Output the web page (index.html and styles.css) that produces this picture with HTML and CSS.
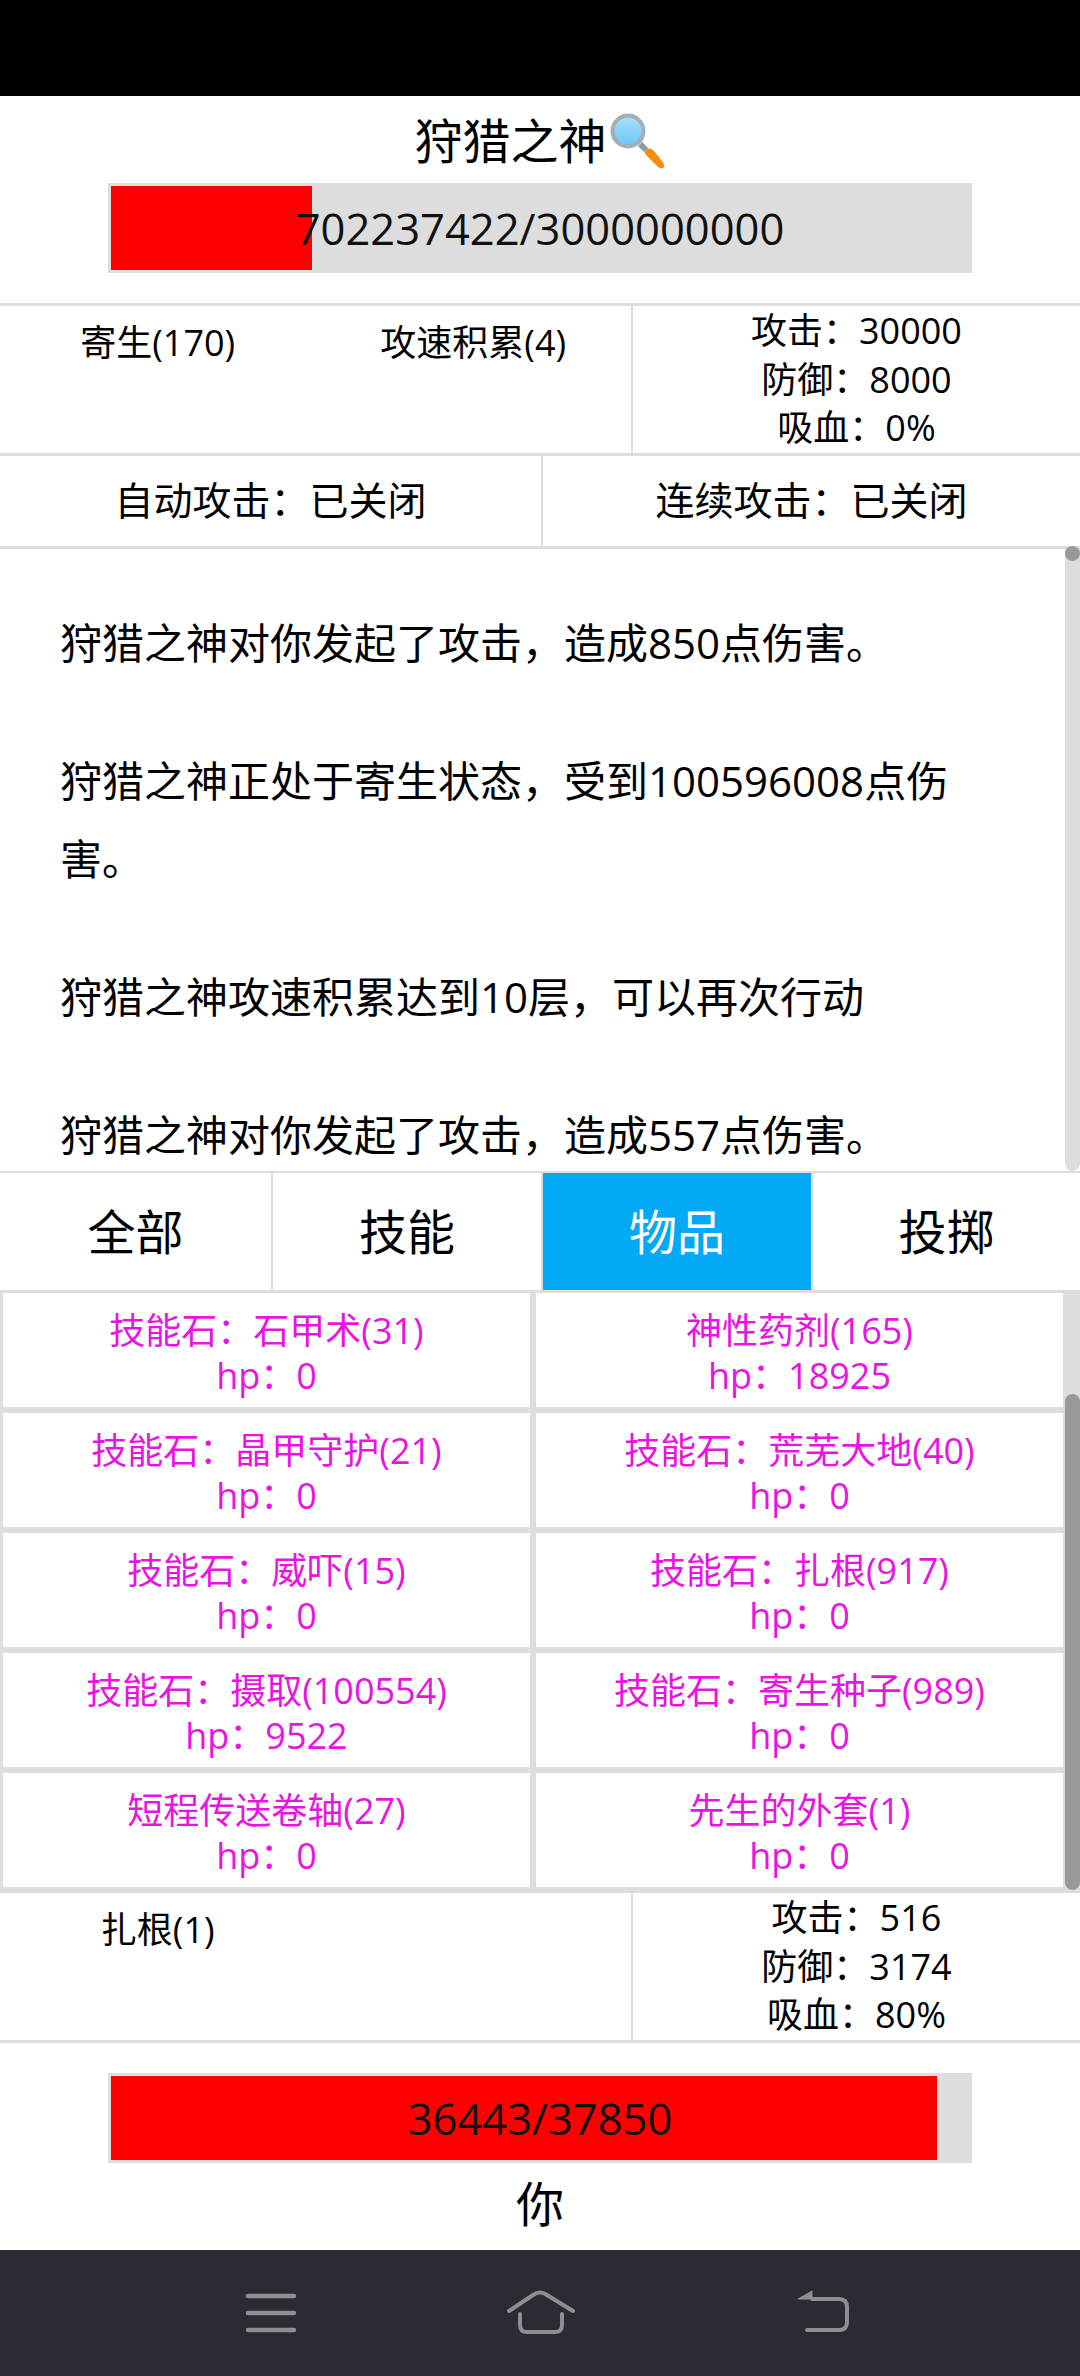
FILE: index.html
```html
<!DOCTYPE html>
<html lang="zh-CN">
<head>
    <meta charset="UTF-8">
    <meta name="viewport" content="width=device-width, initial-scale=1.0">
    <title>狩猎之神</title>
    <link rel="stylesheet" href="styles.css">
</head>
<body>
    <div class="status-bar"></div>

    <div class="unit-name boss-name">
        <span>狩猎之神</span>
        <svg class="emoji" width="56" height="56" viewBox="0 0 56 56">
            <defs>
                <linearGradient id="lens" x1="0" y1="0" x2="0" y2="1">
                    <stop offset="0" stop-color="#a6e0fb"/>
                    <stop offset="1" stop-color="#6cc6f5"/>
                </linearGradient>
            </defs>
            <path d="M30 31 L36 37" stroke="#8f9ba3" stroke-width="6" fill="none"/>
            <path d="M35.5 37 C38 34.5 41 35 44 38 L52 48 C55 52 54.5 54 53 55 C51 56 49 55 46 52 L37 43 C34.500 40.500 34 39 35.500 37 Z" fill="#f58c0f"/>
            <circle cx="18" cy="18" r="15.500" fill="url(#lens)" stroke="#a3aeb5" stroke-width="4"/>
        </svg>
    </div>
    <div class="hp-bar">
        <div class="hp-fill" style="width: 23.4%"></div>
        <div class="hp-text">702237422/3000000000</div>
    </div>

    <div class="info-row boss-info">
        <div class="buffs">
            <div class="buff">寄生(170)</div>
            <div class="buff">攻速积累(4)</div>
        </div>
        <div class="stats">
            <div>攻击：30000</div>
            <div>防御：8000</div>
            <div>吸血：0%</div>
        </div>
    </div>

    <div class="toggles">
        <div class="toggle">自动攻击：已关闭</div>
        <div class="toggle">连续攻击：已关闭</div>
    </div>

    <div class="log-wrap">
        <div class="log">
            <p>狩猎之神对你发起了攻击，造成850点伤害。</p>
            <p>狩猎之神正处于寄生状态，受到100596008点伤害。</p>
            <p>狩猎之神攻速积累达到10层，可以再次行动</p>
            <p>狩猎之神对你发起了攻击，造成557点伤害。</p>
        </div>
        <div class="log-track"><div class="log-thumb"></div></div>
    </div>

    <div class="tabs">
        <div class="tab">全部</div>
        <div class="tab">技能</div>
        <div class="tab active">物品</div>
        <div class="tab">投掷</div>
    </div>

    <div class="items-wrap">
        <div class="items">
            <div class="item">技能石：石甲术(31)<br>hp：0</div>
            <div class="item">神性药剂(165)<br>hp：18925</div>
            <div class="item">技能石：晶甲守护(21)<br>hp：0</div>
            <div class="item">技能石：荒芜大地(40)<br>hp：0</div>
            <div class="item">技能石：威吓(15)<br>hp：0</div>
            <div class="item">技能石：扎根(917)<br>hp：0</div>
            <div class="item">技能石：摄取(100554)<br>hp：9522</div>
            <div class="item">技能石：寄生种子(989)<br>hp：0</div>
            <div class="item">短程传送卷轴(27)<br>hp：0</div>
            <div class="item">先生的外套(1)<br>hp：0</div>
        </div>
        <div class="items-track"><div class="items-thumb"></div></div>
    </div>

    <div class="info-row player-info">
        <div class="buffs">
            <div class="buff">扎根(1)</div>
            <div class="buff"></div>
        </div>
        <div class="stats">
            <div>攻击：516</div>
            <div>防御：3174</div>
            <div>吸血：80%</div>
        </div>
    </div>

    <div class="hp-bar">
        <div class="hp-fill" style="width: 96.28%"></div>
        <div class="hp-text">36443/37850</div>
    </div>
    <div class="unit-name player-name">你</div>

    <div class="nav-bar">
        <svg class="nav-menu" width="60" height="50" viewBox="0 0 60 50">
            <path d="M7 8 H53 M7 25 H53 M7 42 H53" stroke="#8d8e91" stroke-width="4.500" stroke-linecap="round" fill="none"/>
        </svg>
        <svg class="nav-home" width="80" height="50" viewBox="0 0 80 50">
            <path d="M9 23 L33 7 Q40 2 47 7 L73 23" stroke="#8d8e91" stroke-width="4" stroke-linecap="round" fill="none"/>
            <path d="M20 26 V37 Q20 44 27 44 H55 Q62 44 62 37 V26" stroke="#8d8e91" stroke-width="4" stroke-linecap="round" fill="none"/>
        </svg>
        <svg class="nav-back" width="60" height="50" viewBox="0 0 60 50">
            <path d="M5 11 L19 3 V11 Z" fill="#8d8e91" stroke="#8d8e91" stroke-width="1" stroke-linejoin="round"/>
            <path d="M19 11 H46 Q54 11 54 19 V34 Q54 42 46 42 H14" stroke="#8d8e91" stroke-width="4" stroke-linecap="round" fill="none"/>
        </svg>
    </div>
</body>
</html>
```
FILE: styles.css
```css
* {
    box-sizing: border-box;
}
body {
    font-family: "Open Sans", "Noto Sans CJK SC", sans-serif;
    margin: 0;
    padding: 0;
    width: 1080px;
    height: 2376px;
    overflow: hidden;
    background-color: #fff;
    color: #000;
}
.status-bar {
    height: 96px;
    background-color: #000;
}
.unit-name {
    display: flex;
    justify-content: center;
    align-items: center;
    height: 87px;
    font-size: 48px;
}
.boss-name {
    padding-bottom: 4px;
}
.player-name {
    padding-bottom: 11px;
}
.emoji {
    margin-left: 3px;
    margin-top: 6px;
}
.hp-bar {
    position: relative;
    width: 864px;
    height: 90px;
    margin: 0 auto;
    padding: 3px;
    background-color: #ddd;
}
.hp-fill {
    height: 84px;
    background-color: #f00;
}
.hp-text {
    position: absolute;
    left: 0;
    right: 0;
    top: 1px;
    line-height: 90px;
    text-align: center;
    font-size: 43.500px;
    color: #111;
}
.info-row {
    display: flex;
    height: 153px;
    border-top: 3px solid #ddd;
    border-bottom: 3px solid #ddd;
    font-size: 36px;
}
.boss-info {
    margin-top: 30px;
}
.player-info {
    border-top: 0;
    height: 150px;
    margin-bottom: 30px;
}
.buffs {
    display: flex;
    width: 631px;
    padding-top: 13px;
    border-right: 0;
}
.buff {
    width: 50%;
    line-height: 48px;
    text-align: center;
}
.stats {
    flex: 1;
    padding-top: 1px;
    border-left: 2px solid #ddd;
    line-height: 48.500px;
    text-align: center;
}
.toggles {
    display: flex;
    height: 93px;
    border-bottom: 3px solid #ddd;
    font-size: 39px;
}
.toggle {
    width: 541px;
    line-height: 88px;
    text-align: center;
}
.toggle + .toggle {
    flex: 1;
    border-left: 2px solid #ddd;
}
.log-wrap {
    display: flex;
    height: 622px;
}
.log {
    flex: 1;
    padding: 55px 60px 0;
    overflow: hidden;
    font-size: 42px;
    line-height: 78px;
}
.log p {
    margin: 0 0 60px;
    padding-right: 24px;
}
.log-track {
    flex: 0 0 15px;
    background-color: #ddd;
    border-radius: 0 0 8px 8px;
    margin-top: -3px;
}
.log-thumb {
    height: 15px;
    background-color: #999;
    border-radius: 8px;
}
.tabs {
    display: grid;
    grid-template-columns: 271px 268px 268px 267px;
    column-gap: 2px;
    height: 119px;
    border-top: 2px solid #ddd;
    background-color: #ddd;
}
.tab {
    background-color: #fff;
    font-size: 48px;
    line-height: 117px;
    text-align: center;
}
.tab.active {
    background-color: #03a9f4;
    color: #fff;
}
.items-wrap {
    display: flex;
    height: 603px;
    border-bottom: 3px solid #ddd;
    background-color: #ddd;
}
.items {
    flex: 0 0 1066px;
    display: grid;
    grid-template-columns: 1fr 1fr;
    grid-auto-rows: 120px;
}
.item {
    margin: 3px;
    padding-top: 15px;
    background-color: #fff;
    color: #e814e0;
    font-size: 36px;
    line-height: 45px;
    text-align: center;
}
.items-track {
    flex: 0 0 14px;
}
.items-thumb {
    width: 15px;
    height: 496px;
    margin: 104px 0 0 -1px;
    background-color: #999;
    border-radius: 8px;
}
.nav-bar {
    display: flex;
    align-items: flex-start;
    height: 126px;
    padding: 38px 0 0 241px;
    background-color: #292c33;
}
.nav-home {
    margin-left: 199px;
}
.nav-back {
    margin-left: 213px;
}
```
